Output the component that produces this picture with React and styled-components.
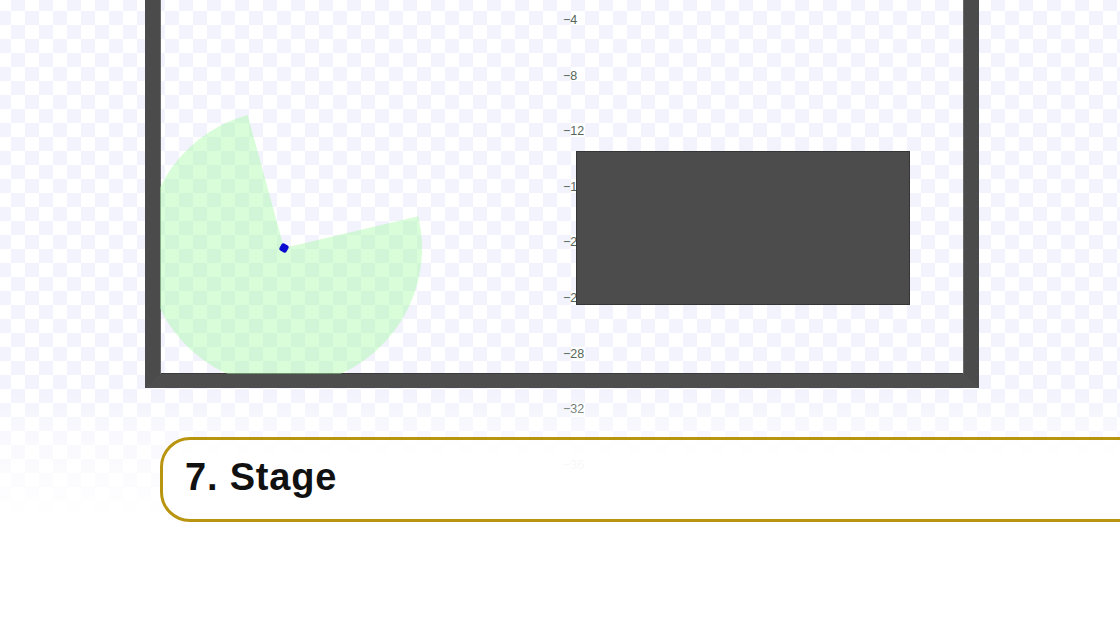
import React from 'react';
import styled, { createGlobalStyle } from 'styled-components';

const GlobalStyle = createGlobalStyle`
  html, body {
    margin: 0;
    padding: 0;
    background: #ffffff;
  }
  body {
    font-family: "Liberation Sans", Arial, sans-serif;
  }
`;

const Page = styled.div`
  position: relative;
  width: 1120px;
  height: 630px;
  overflow: hidden;
  padding-left: 145px;
  box-sizing: border-box;
  background-color: #ffffff;
  background-image:
    linear-gradient(45deg, #f3f3fd 25%, transparent 25%, transparent 75%, #f3f3fd 75%),
    linear-gradient(45deg, #f3f3fd 25%, transparent 25%, transparent 75%, #f3f3fd 75%);
  background-size: 28px 28px;
  background-position: -3px -3px, 11px 11px;
`;

const Frame = styled.div`
  width: 834px;
  height: 388px;
  box-sizing: border-box;
  border-left: 15px solid #4b4b4b;
  border-right: 15px solid #4b4b4b;
  border-bottom: 14px solid #4e4e4e;
  box-shadow: inset 1px 0 0 #6a6a6a, inset -1px 0 0 #6a6a6a, inset 0 -1px 0 #3c3c3c;
  overflow: hidden;
`;

const World = styled.svg`
  display: block;
  width: 804px;
  height: 374px;
`;

/* y axis labels of the world, drawn over the frame */
const Axis = styled.div`
  position: absolute;
  left: 563px;
  top: -7px;
  display: flex;
  flex-direction: column;
`;

const Tick = styled.span`
  height: 55.6px;
  line-height: 55.6px;
  font-family: "Liberation Sans", Arial, sans-serif;
  font-size: 12.5px;
  color: #55665a;
  white-space: nowrap;
`;

const Obstacle = styled.div`
  position: absolute;
  left: 576px;
  top: 151px;
  width: 334px;
  height: 154px;
  box-sizing: border-box;
  background: #4c4c4c;
  border: 1px solid #363636;
`;

const Fade = styled.div`
  position: absolute;
  left: 0;
  right: 0;
  top: 392px;
  bottom: 0;
  background: linear-gradient(
    to bottom,
    rgba(255, 255, 255, 0) 0px,
    rgba(255, 255, 255, 0.35) 30px,
    rgba(255, 255, 255, 0.65) 75px,
    #ffffff 125px
  );
  pointer-events: none;
`;

const TitleBox = styled.div`
  position: relative;
  z-index: 2;
  margin-top: 49px;
  margin-left: 15px;
  width: 1000px;
  height: 85px;
  box-sizing: border-box;
  border: 3px solid #b8940f;
  border-radius: 30px;
  background: rgba(255, 255, 255, 0.85);
  display: flex;
  align-items: center;
  padding-left: 22px;
`;

const Title = styled.h2`
  margin: 0 0 4px;
  font-family: "Liberation Sans", Arial, sans-serif;
  font-weight: 700;
  font-size: 38px;
  letter-spacing: 0.8px;
  color: #111111;
`;

const ticks = [-4, -8, -12, -16, -20, -24, -28, -32, -36];

export default function App() {
  return (
    <>
      <GlobalStyle />
      <Page>
        <Frame>
          <World viewBox="0 0 804 374">
            <path
              d="M124 248 L258.3 216.25 A138 138 0 1 1 87.6 114.9 Z"
              fill="rgba(168, 250, 168, 0.45)"
            />
            <rect
              x="120"
              y="244"
              width="8"
              height="8"
              rx="2"
              fill="#0a0ad0"
              transform="rotate(30 124 248)"
            />
          </World>
        </Frame>
        <Axis>
          {ticks.map((t) => (
            <Tick key={t}>−{Math.abs(t)}</Tick>
          ))}
        </Axis>
        <Obstacle />
        <Fade />
        <TitleBox>
          <Title>7. Stage</Title>
        </TitleBox>
      </Page>
    </>
  );
}
